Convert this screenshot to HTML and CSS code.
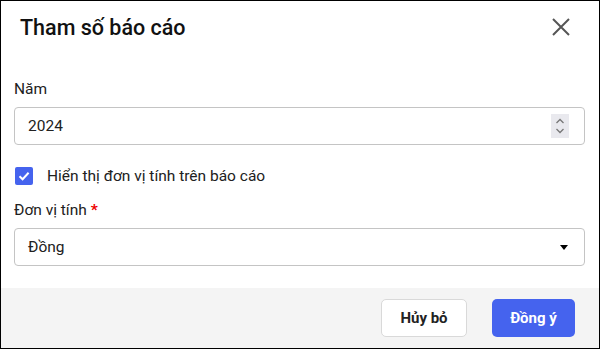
FILE: index.html
```html
<!DOCTYPE html>
<html lang="vi">
<head>
  <meta charset="UTF-8" />
  <title>Tham số báo cáo</title>
  <link rel="stylesheet" href="styles.css">
</head>
<body>
  <div class="dialog">
    <div class="dialog-header">
      <h2>Tham số báo cáo</h2>
      <button class="close-btn" aria-label="Đóng">
        <svg width="18" height="18" viewBox="0 0 18 18"><path d="M1 1L17 17M17 1L1 17" stroke="#555" stroke-width="2" fill="none"/></svg>
      </button>
    </div>

    <div class="dialog-body">
      <label class="field-label">Năm</label>
      <div class="field">
        <span>2024</span>
        <span class="spinner">
          <svg width="10" height="18" viewBox="0 0 10 18"><path d="M1.5 6L5 2.5L8.5 6M1.5 12L5 15.5L8.5 12" stroke="#777" stroke-width="1.3" fill="none"/></svg>
        </span>
      </div>

      <label class="check-row">
        <span class="checkbox">
          <svg width="14" height="14" viewBox="0 0 14 14"><path d="M2.5 7.2L5.6 10.2L11.6 3.8" stroke="#fff" stroke-width="2" fill="none"/></svg>
        </span>
        Hiển thị đơn vị tính trên báo cáo
      </label>

      <label class="field-label">Đơn vị tính <span class="req">*</span></label>
      <div class="field">
        <span>Đồng</span>
        <span class="caret"></span>
      </div>
    </div>

    <div class="dialog-footer">
      <button class="btn btn-cancel">Hủy bỏ</button>
      <button class="btn btn-ok">Đồng ý</button>
    </div>
  </div>
</body>
</html>
```

FILE: styles.css
```css
body {
  margin: 0;
  background: #fff;
  font-family: Roboto, "Liberation Sans", sans-serif;
  color: #212121;
}
.dialog {
  width: 600px;
  height: 349px;
  box-sizing: border-box;
  border: 1px solid #000;
  display: flex;
  flex-direction: column;
  background: #fff;
}
.dialog-header {
  display: flex;
  align-items: center;
  justify-content: space-between;
  height: 52px;
  padding: 0 29px 0 19px;
}
.dialog-header h2 {
  margin: 0;
  font-size: 21.5px;
  font-weight: 500;
  color: #111;
}
.close-btn {
  background: none;
  border: none;
  padding: 0;
  display: flex;
  cursor: pointer;
}
.dialog-body {
  flex: 1;
  padding: 26px 14px 0 13px;
}
.field-label {
  display: block;
  font-size: 15.5px;
  line-height: 20px;
  margin-bottom: 8px;
}
.req {
  color: #e00;
  font-weight: 700;
}
.field {
  height: 38px;
  box-sizing: border-box;
  border: 1px solid #c4c4c4;
  border-radius: 4px;
  display: flex;
  align-items: center;
  justify-content: space-between;
  padding: 0 16px 0 13px;
  font-size: 15.5px;
}
.spinner {
  width: 18px;
  height: 24px;
  background: #e9e9ee;
  display: flex;
  align-items: center;
  justify-content: center;
  margin-right: -1px;
}
.caret {
  width: 0;
  height: 0;
  border-left: 4.5px solid transparent;
  border-right: 4.5px solid transparent;
  border-top: 5px solid #000;
}
.check-row {
  display: flex;
  align-items: center;
  gap: 14px;
  font-size: 15.5px;
  margin: 22px 0 15px 1px;
}
.checkbox {
  width: 18px;
  height: 18px;
  border-radius: 2px;
  background: #4563ee;
  display: flex;
  align-items: center;
  justify-content: center;
}
.dialog-footer {
  height: 60px;
  background: #f4f4f4;
  display: flex;
  align-items: center;
  justify-content: flex-end;
  gap: 25px;
  padding: 0 24px 0 0;
}
.btn {
  height: 38px;
  border-radius: 5px;
  font-family: Roboto, "Liberation Sans", sans-serif;
  font-size: 15px;
  font-weight: 700;
  cursor: pointer;
}
.btn-cancel {
  width: 86px;
  background: #fff;
  border: 1px solid #d9d9d9;
  color: #222;
}
.btn-ok {
  width: 83px;
  background: #4563ee;
  border: none;
  color: #fff;
}
```
